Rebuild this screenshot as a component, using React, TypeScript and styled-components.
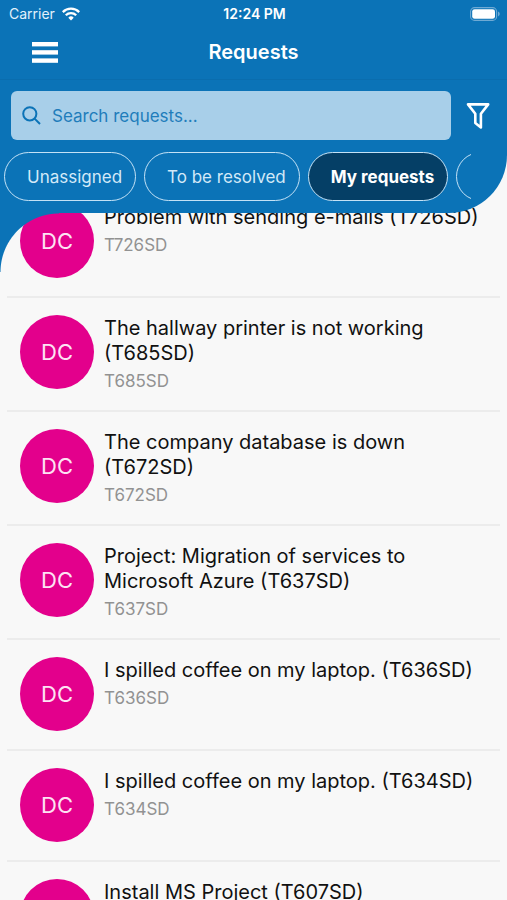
import React from "react";
import styled, { createGlobalStyle } from "styled-components";

const blue = "#0b73b7";

const GlobalStyle = createGlobalStyle`
  * { box-sizing: border-box; }
  body {
    margin: 0;
    background: #f8f8f8;
    font-family: Inter, "Liberation Sans", sans-serif;
  }
  button, input { font-family: inherit; }
`;

const Screen = styled.div`
  display: flex;
  flex-direction: column;
  height: 100vh;
  overflow: hidden;
`;

const Header = styled.header`
  position: relative;
  z-index: 1;
  flex: none;
  padding-bottom: 12px;
  background: ${blue};
  border-bottom-right-radius: 58px;
  color: #fff;

  &::after {
    content: "";
    position: absolute;
    top: 100%;
    left: 0;
    width: 59px;
    height: 59px;
    background: radial-gradient(circle at 100% 100%, transparent 58px, ${blue} 59px);
    pointer-events: none;
  }
`;

const StatusBar = styled.div`
  display: grid;
  grid-template-columns: 1fr auto 1fr;
  align-items: center;
  height: 27px;
  padding: 0 7px 0 9px;
  font-size: 14px;
  line-height: 16px;
`;

const Carrier = styled.span`
  display: flex;
  align-items: center;
  gap: 7px;
  color: #e2f1fb;
`;

const Time = styled.time`
  font-weight: 600;
`;

const Battery = styled.svg`
  justify-self: end;
`;

const NavBar = styled.div`
  display: grid;
  grid-template-columns: 1fr auto 1fr;
  align-items: center;
  height: 53px;
  padding: 0 32px 2px;
  border-bottom: 1px solid #0a6dae;
`;

const IconButton = styled.button`
  display: flex;
  justify-self: start;
  padding: 0;
  border: 0;
  background: none;
  color: #fff;
  cursor: pointer;
`;

const Title = styled.h1`
  margin: 0;
  font-size: 20px;
  line-height: 24px;
  font-weight: 600;
`;

const SearchRow = styled.div`
  display: flex;
  align-items: center;
  gap: 15px;
  padding: 11px 17px 12px 11px;
`;

const SearchField = styled.label`
  display: flex;
  flex: 1;
  align-items: center;
  gap: 11px;
  height: 49px;
  padding: 0 11px;
  border-radius: 6px;
  background: #a8cfe9;
  color: ${blue};
`;

const SearchInput = styled.input`
  flex: 1;
  min-width: 0;
  padding: 0;
  border: 0;
  outline: 0;
  background: transparent;
  color: ${blue};
  font-size: 17px;
  line-height: 24px;

  &::placeholder {
    color: #1f7dbb;
    opacity: 1;
  }
`;

const Filters = styled.div`
  display: flex;
  gap: 8px;
  margin: 0 36px 0 4px;
  overflow: hidden;
`;

const Chip = styled.button<{ $active?: boolean }>`
  flex: none;
  min-width: 120px;
  height: 49px;
  padding: 0 13px 0 22px;
  border: 1px solid #c4e2f6;
  border-radius: 25px;
  background: ${(p) => (p.$active ? "#053f66" : "transparent")};
  color: ${(p) => (p.$active ? "#fff" : "#d3e9f8")};
  font-size: 17px;
  line-height: 24px;
  font-weight: ${(p) => (p.$active ? 700 : 400)};
  white-space: nowrap;
  cursor: pointer;
`;

const RequestList = styled.ul`
  flex: 1;
  min-height: 0;
  margin: -26px 0 0;
  padding: 0 7px;
  overflow: hidden;
  list-style: none;
`;

const Request = styled.li`
  display: flex;
  gap: 10px;
  padding: 17px 13px 18px;
  border-bottom: 2px solid #ececec;
`;

const Avatar = styled.span`
  display: flex;
  flex: none;
  align-items: center;
  justify-content: center;
  width: 74px;
  height: 74px;
  border-radius: 50%;
  background: #e3008c;
  color: #fde3f3;
  font-size: 22px;
  line-height: 26px;
`;

const RequestText = styled.div`
  flex: 1;
  min-width: 0;
  padding: 1px 0 2px;
`;

const RequestTitle = styled.h2`
  margin: 0 0 6px;
  color: #111;
  font-size: 20px;
  line-height: 25px;
  font-weight: 400;
`;

const RequestCode = styled.p`
  margin: 0;
  color: #929292;
  font-size: 17px;
  line-height: 18px;
`;

const requests = [
  { title: "Problem with sending e-mails", code: "T726SD" },
  { title: "The hallway printer is not working", code: "T685SD" },
  { title: "The company database is down", code: "T672SD" },
  { title: "Project: Migration of services to Microsoft Azure", code: "T637SD" },
  { title: "I spilled coffee on my laptop.", code: "T636SD" },
  { title: "I spilled coffee on my laptop.", code: "T634SD" },
  { title: "Install MS Project", code: "T607SD" },
];

const filters = ["Unassigned", "To be resolved", "My requests"];

export default function App() {
  const [active, setActive] = React.useState("My requests");
  return (
    <Screen>
      <GlobalStyle />
      <Header>
        <StatusBar>
          <Carrier>
            Carrier
            <svg width="18" height="14" viewBox="0 0 18 14" fill="none" stroke="#fff" strokeWidth="2.3" aria-hidden="true">
              <path d="M0.8 5.1a11.6 11.6 0 0 1 16.4 0" />
              <path d="M3.8 8.2a7.4 7.4 0 0 1 10.4 0" />
              <path d="M9 13.6l-2.7-2.9a3.8 3.8 0 0 1 5.4 0z" fill="#fff" stroke="none" />
            </svg>
          </Carrier>
          <Time>12:24 PM</Time>
          <Battery width="30" height="14" viewBox="0 0 30 14" aria-hidden="true">
            <rect x="0.6" y="0.6" width="26" height="12.8" rx="4" fill="none" stroke="#6faad4" strokeWidth="1.1" />
            <rect x="2.2" y="2.2" width="22.8" height="9.6" rx="2.4" fill="#fff" />
            <path d="M28 4.6q1.8 0.9 1.8 2.4t-1.8 2.4z" fill="#6faad4" />
          </Battery>
        </StatusBar>
        <NavBar>
          <IconButton aria-label="Menu">
            <svg width="26" height="21" viewBox="0 0 26 21" fill="currentColor" aria-hidden="true">
              <rect width="26" height="4.4" />
              <rect y="8.2" width="26" height="4.4" />
              <rect y="16.4" width="26" height="4.4" />
            </svg>
          </IconButton>
          <Title>Requests</Title>
        </NavBar>
        <SearchRow>
          <SearchField>
            <svg width="19" height="19" viewBox="0 0 19 19" fill="none" stroke="currentColor" strokeWidth="2" aria-hidden="true">
              <circle cx="7.8" cy="7.8" r="6.6" />
              <path d="M12.6 12.6l5.4 5.4" />
            </svg>
            <SearchInput type="search" placeholder="Search requests..." aria-label="Search requests" />
          </SearchField>
          <IconButton aria-label="Filter">
            <svg width="24" height="28" viewBox="0 0 24 28" fill="none" stroke="currentColor" strokeWidth="2.6" strokeLinejoin="round" aria-hidden="true">
              <path d="M2 2.4h20.2l-7.3 9.4v13.6l-5.6-4.4v-9.2z" />
            </svg>
          </IconButton>
        </SearchRow>
        <Filters>
          {filters.map((name) => (
            <Chip key={name} $active={name === active} aria-pressed={name === active} onClick={() => setActive(name)}>
              {name}
            </Chip>
          ))}
          <Chip aria-label="More filters" />
        </Filters>
      </Header>
      <RequestList>
        {requests.map(({ title, code }) => (
          <Request key={code}>
            <Avatar>DC</Avatar>
            <RequestText>
              <RequestTitle>{`${title} (${code})`}</RequestTitle>
              <RequestCode>{code}</RequestCode>
            </RequestText>
          </Request>
        ))}
      </RequestList>
    </Screen>
  );
}
